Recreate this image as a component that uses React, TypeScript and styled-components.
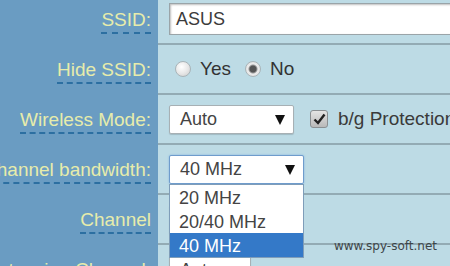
import React from 'react';
import styled, { createGlobalStyle } from 'styled-components';

const GlobalStyle = createGlobalStyle`
	html, body {
		margin: 0;
		padding: 0;
		width: 450px;
		height: 266px;
		overflow: hidden;
		background: #bddbe5;
		font-family: 'Liberation Sans', Arial, sans-serif;
	}
`;

const Table = styled('div')`
	position: relative;
	width: 450px;
	height: 271px;
	overflow: hidden;
	display: grid;
	grid-template-columns: 158px 1fr;
	grid-auto-rows: 50px;
	margin-top: -5px;
	background: #bddbe5;
`;

const LabelCell = styled('div')`
	background: #6a9cc2;
	display: flex;
	justify-content: flex-end;
	align-items: center;
	padding-right: 7px;
	white-space: nowrap;
`;

const Label = styled('span')`
	color: #e7ecab;
	font-size: 19px;
	line-height: 20px;
	padding-bottom: 2px;
	margin-top: 4px;
	border-bottom: 2px dashed #2c6fa1;
`;

const FieldCell = styled('div')<{ $last?: boolean }>`
	display: flex;
	align-items: center;
	gap: 10px;
	padding-left: 11px;
	border-bottom: ${(p) => (p.$last ? 'none' : '2px solid #93abb4')};
	white-space: nowrap;
	color: #3a3a3a;
	font-size: 19px;
`;

const TextInput = styled('div')`
	flex: 1;
	height: 30px;
	margin-right: -20px;
	background: #fff;
	border: 1px solid #9aa4a8;
	box-shadow: inset 1px 1px 2px rgba(0, 0, 0, 0.25);
	display: flex;
	align-items: center;
	padding-left: 6px;
	font-size: 18px;
	color: #3c3c3c;
`;

const Choice = styled('label')`
	display: flex;
	align-items: center;
	gap: 9px;
	font-size: 19px;
	color: #333;

	&:first-child {
		margin-left: 6px;
		margin-right: 4px;
	}
`;

const Radio = styled('span')<{ $on?: boolean }>`
	width: 14px;
	height: 14px;
	border-radius: 50%;
	border: 1px solid #a9b4b8;
	background: ${(p) =>
		p.$on
			? 'radial-gradient(circle, #555 0 3px, #9a9a9a 4px, #ececec 5px, #d8d8d8 100%)'
			: 'radial-gradient(circle at 40% 35%, #ffffff 0, #e6e6e6 55%, #c9c9c9 100%)'};
`;

const SelectWrap = styled('div')`
	position: relative;
`;

const Select = styled('div')<{ $w: number; $focus?: boolean }>`
	width: ${(p) => p.$w}px;
	height: 29px;
	box-sizing: border-box;
	background: #fff;
	border: 1px solid ${(p) => (p.$focus ? '#6f9ccc' : '#a7b0b4')};
	border-radius: 2px;
	box-shadow: ${(p) => (p.$focus ? '0 0 2px #7fb0e0' : '0 1px 1px rgba(0,0,0,0.15)')};
	display: flex;
	align-items: center;
	justify-content: space-between;
	padding: 0 8px 0 10px;
	font-size: 18px;
	color: #444;
`;

const Arrow = styled('span')`
	width: 0;
	height: 0;
	border-left: 5px solid transparent;
	border-right: 5px solid transparent;
	border-top: 10px solid #111;
	margin-top: 1px;
`;

const DropList = styled('div')`
	position: absolute;
	top: 29px;
	left: 0;
	width: 135px;
	box-sizing: border-box;
	background: #fff;
	border: 1px solid #7f9db9;
	z-index: 5;
`;

const Option = styled('div')<{ $sel?: boolean }>`
	height: 24px;
	line-height: 26px;
	padding-left: 9px;
	font-size: 18px;
	color: ${(p) => (p.$sel ? '#fff' : '#444')};
	background: ${(p) => (p.$sel ? '#3479c8' : '#fff')};
`;

const CheckBox = styled('span')`
	width: 16px;
	height: 16px;
	margin-left: 6px;
	border: 1px solid #8a8f92;
	border-radius: 3px;
	background: linear-gradient(#e4e4e4, #b9b9b9);
	display: flex;
	align-items: center;
	justify-content: center;
`;

const Mark = styled('span')`
	position: absolute;
	right: 13px;
	bottom: 13px;
	font-family: 'DejaVu Sans', sans-serif;
	font-size: 12px;
	color: #3d4548;
`;

const App = () => {
	return (
		<>
			<GlobalStyle />
			<Table>
				<LabelCell>
					<Label>SSID:</Label>
				</LabelCell>
				<FieldCell>
					<TextInput>ASUS</TextInput>
				</FieldCell>

				<LabelCell>
					<Label>Hide SSID:</Label>
				</LabelCell>
				<FieldCell>
					<Choice>
						<Radio />
						Yes
					</Choice>
					<Choice>
						<Radio $on />
						No
					</Choice>
				</FieldCell>

				<LabelCell>
					<Label>Wireless Mode:</Label>
				</LabelCell>
				<FieldCell>
					<Select $w={125}>
						Auto
						<Arrow />
					</Select>
					<CheckBox>
						<svg width="13" height="12" viewBox="0 0 13 12">
							<path d="M1.5 6.5 L5 10 L11.5 1.5" fill="none" stroke="#222" strokeWidth="2.4" />
						</svg>
					</CheckBox>
					<span>b/g Protection</span>
				</FieldCell>

				<LabelCell>
					<Label>Channel bandwidth:</Label>
				</LabelCell>
				<FieldCell>
					<SelectWrap>
						<Select $w={135} $focus>
							40 MHz
							<Arrow />
						</Select>
						<DropList>
							<Option>20 MHz</Option>
							<Option>20/40 MHz</Option>
							<Option $sel>40 MHz</Option>
						</DropList>
					</SelectWrap>
				</FieldCell>

				<LabelCell>
					<Label>Channel</Label>
				</LabelCell>
				<FieldCell>
					<Select $w={82}>
						Auto
						<Arrow />
					</Select>
				</FieldCell>

				<LabelCell>
					<Label>Extension Channel:</Label>
				</LabelCell>
				<FieldCell $last>
					<Select $w={82}>
						Auto
						<Arrow />
					</Select>
				</FieldCell>
				<Mark>www.spy-soft.net</Mark>
			</Table>
		</>
	);
};

export default App;
